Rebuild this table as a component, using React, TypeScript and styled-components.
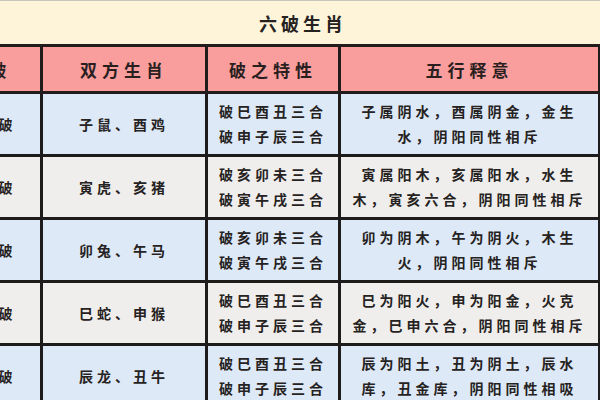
import styled, { createGlobalStyle } from "styled-components";

const GlobalStyle = createGlobalStyle`
  html, body {
    margin: 0;
    padding: 0;
    background: #fbf7ee;
  }
  body {
    font-family: "Noto Sans CJK SC", "Noto Sans", sans-serif;
    color: #262222;
  }
`;

const Page = styled.div`
  width: 600px;
  height: 400px;
  overflow: hidden;
  background: #fdf4da;
`;

const TitleBar = styled.div`
  height: 43px;
  border-top: 1px solid #c9c5bb;
  display: flex;
  align-items: center;
  justify-content: center;
  font-size: 18px;
  font-weight: 700;
  letter-spacing: 4px;
  padding-left: 6px;
  background: #fdf4da;
`;

const Table = styled.table`
  margin-left: -64px;
  width: 662px;
  border-collapse: collapse;
  table-layout: fixed;
  border-right: 1px solid #9a9a9a;
`;

const HeadCell = styled.th`
  height: 44px;
  padding: 0;
  background: #fa9d9d;
  border: 3px solid #221c1c;
  font-size: 17px;
  font-weight: 700;
  letter-spacing: 5px;
  text-align: center;
  color: #2a1f1f;
`;

const Row = styled.tr<{ $tint: "blue" | "grey" }>`
  background: ${(p) => (p.$tint === "blue" ? "#dde9f6" : "#efeeec")};
`;

const Cell = styled.td`
  height: 60px;
  padding: 0 6px;
  border: 3px solid #1d1b1b;
  font-size: 14px;
  font-weight: 700;
  letter-spacing: 4px;
  line-height: 25px;
  text-align: center;
  white-space: nowrap;
`;

const Line = styled.div`
  display: block;
`;

type Item = {
  name: string;
  pair: string;
  rule: string[];
  meaning: string[];
};

const items: Item[] = [
  {
    name: "子酉破",
    pair: "子鼠、酉鸡",
    rule: ["破巳酉丑三合", "破申子辰三合"],
    meaning: ["子属阴水，酉属阴金，金生", "水，阴阳同性相斥"],
  },
  {
    name: "寅亥破",
    pair: "寅虎、亥猪",
    rule: ["破亥卯未三合", "破寅午戌三合"],
    meaning: ["寅属阳木，亥属阳水，水生", "木，寅亥六合，阴阳同性相斥"],
  },
  {
    name: "卯午破",
    pair: "卯兔、午马",
    rule: ["破亥卯未三合", "破寅午戌三合"],
    meaning: ["卯为阴木，午为阴火，木生", "火，阴阳同性相斥"],
  },
  {
    name: "巳申破",
    pair: "巳蛇、申猴",
    rule: ["破巳酉丑三合", "破申子辰三合"],
    meaning: ["巳为阳火，申为阳金，火克", "金，巳申六合，阴阳同性相斥"],
  },
  {
    name: "辰丑破",
    pair: "辰龙、丑牛",
    rule: ["破巳酉丑三合", "破申子辰三合"],
    meaning: ["辰为阳土，丑为阴土，辰水", "库，丑金库，阴阳同性相吸"],
  },
];

const App = () => {
  return (
    <Page>
      <GlobalStyle />
      <TitleBar>六破生肖</TitleBar>
      <Table>
        <colgroup>
          <col style={{ width: 104 }} />
          <col style={{ width: 165 }} />
          <col style={{ width: 133 }} />
          <col style={{ width: 260 }} />
        </colgroup>
        <thead>
          <tr>
            <HeadCell>六破</HeadCell>
            <HeadCell>双方生肖</HeadCell>
            <HeadCell>破之特性</HeadCell>
            <HeadCell>五行释意</HeadCell>
          </tr>
        </thead>
        <tbody>
          {items.map((item, i) => (
            <Row key={item.name} $tint={i % 2 === 0 ? "blue" : "grey"}>
              <Cell>{item.name}</Cell>
              <Cell>{item.pair}</Cell>
              <Cell>
                {item.rule.map((r) => (
                  <Line key={r}>{r}</Line>
                ))}
              </Cell>
              <Cell>
                {item.meaning.map((m) => (
                  <Line key={m}>{m}</Line>
                ))}
              </Cell>
            </Row>
          ))}
        </tbody>
      </Table>
    </Page>
  );
};

export default App;
